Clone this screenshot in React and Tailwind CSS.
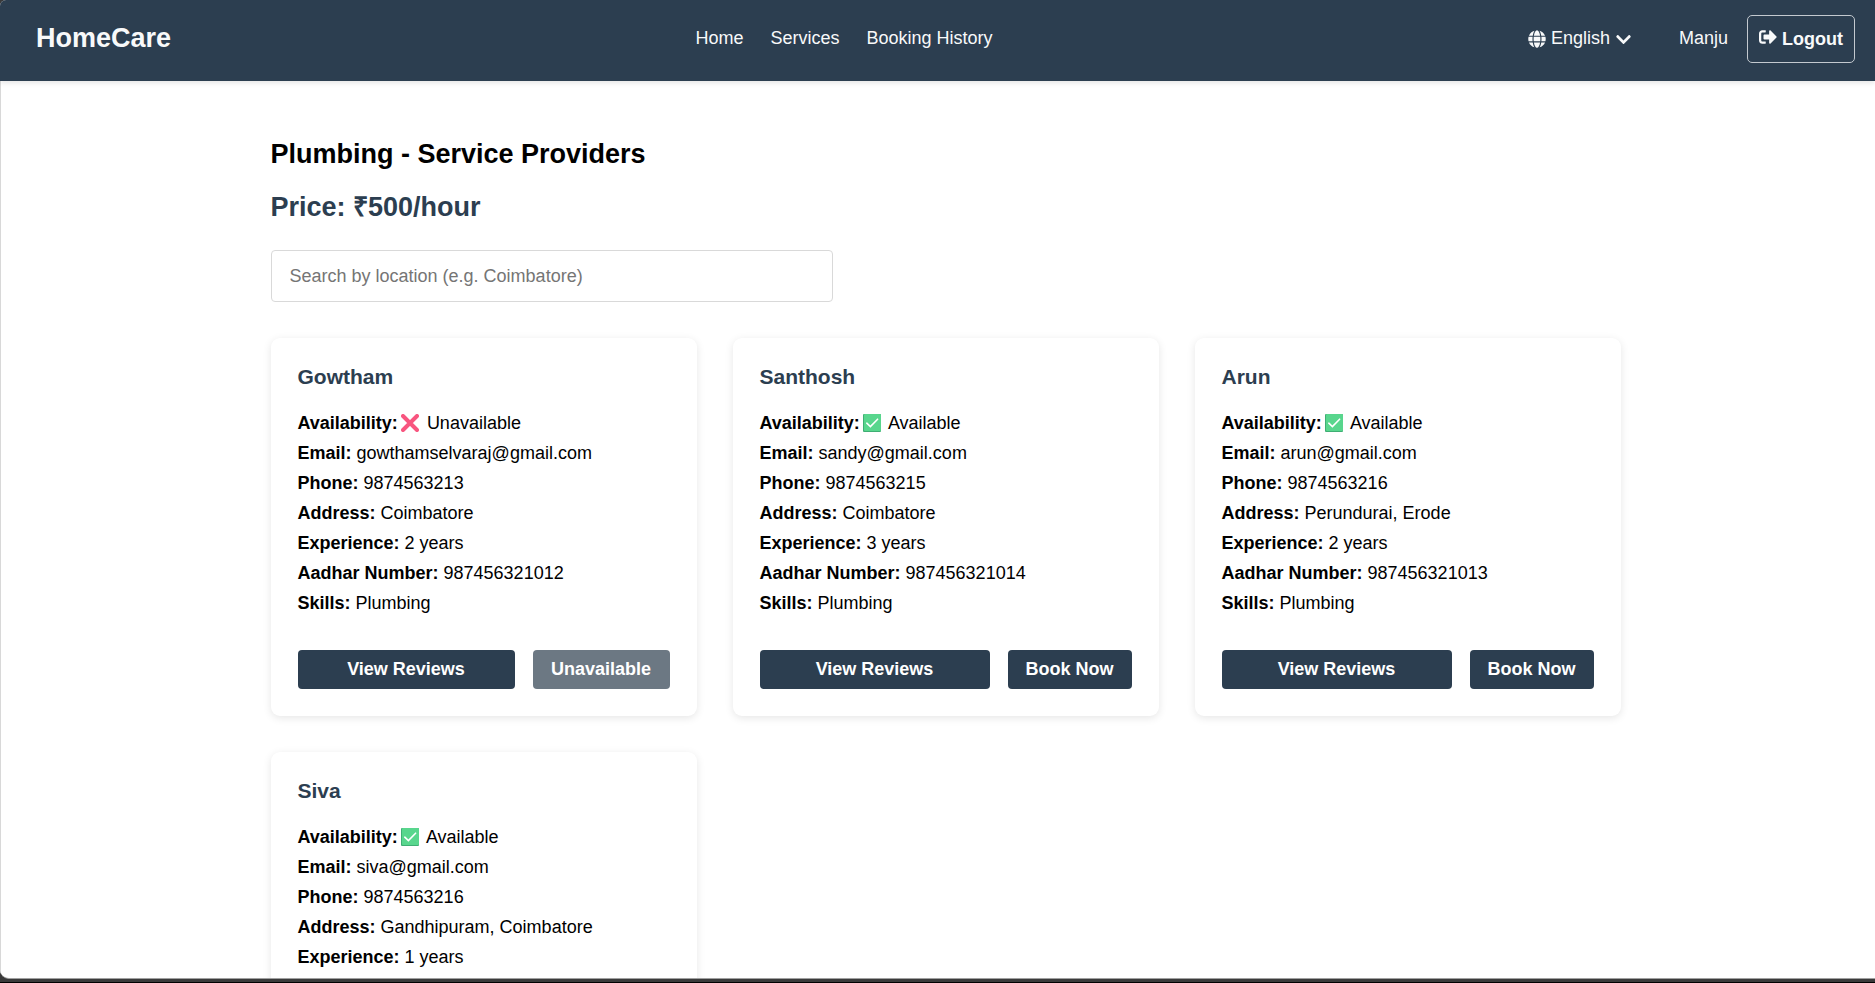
import React from "react";
import { FaGlobe, FaChevronDown, FaSignOutAlt } from "react-icons/fa";

const providers = [
  { name: "Gowtham", available: false, email: "gowthamselvaraj@gmail.com", phone: "9874563213", address: "Coimbatore", years: 2, aadhar: "987456321012", skills: "Plumbing" },
  { name: "Santhosh", available: true, email: "sandy@gmail.com", phone: "9874563215", address: "Coimbatore", years: 3, aadhar: "987456321014", skills: "Plumbing" },
  { name: "Arun", available: true, email: "arun@gmail.com", phone: "9874563216", address: "Perundurai, Erode", years: 2, aadhar: "987456321013", skills: "Plumbing" },
  { name: "Siva", available: true, email: "siva@gmail.com", phone: "9874563216", address: "Gandhipuram, Coimbatore", years: 1 },
];

function CrossMark() {
  return (
    <svg viewBox="0 0 18 18" className="h-[18px] w-[18px] shrink-0">
      <path d="M2 2 16 16M16 2 2 16" stroke="#f8557f" strokeWidth="4" strokeLinecap="round" />
    </svg>
  );
}

function CheckMark() {
  return (
    <svg viewBox="0 0 18 18" className="h-[18px] w-[18px] shrink-0">
      <rect width="18" height="18" rx="1" fill="#3fae74" />
      <rect x="1" width="17" height="17" rx="1" fill="#58d68d" />
      <path d="M3.8 9.2 7.4 12.6 14.6 5.2" fill="none" stroke="#fff" strokeWidth="1.6" strokeLinecap="round" />
    </svg>
  );
}

function Row({ label, children }) {
  return (
    <p>
      <strong>{label}:</strong> {children}
    </p>
  );
}

function ProviderCard({ p }) {
  return (
    <article className="h-[378px] rounded-[9px] bg-white p-[27px] shadow-[0_2px_9px_rgba(0,0,0,0.1)]">
      <h3 className="text-[21px] font-bold leading-6 text-[#2c3e50]">{p.name}</h3>
      <div className="mt-[19px] text-[18px] leading-[30px] text-black">
        <p className="flex items-center">
          <strong>Availability:</strong>
          <span className="ml-[3px] flex items-center">
            {p.available ? <CheckMark /> : <CrossMark />}
            <span className={p.available ? "ml-[7px]" : "ml-2"}>{p.available ? "Available" : "Unavailable"}</span>
          </span>
        </p>
        <Row label="Email">{p.email}</Row>
        <Row label="Phone">{p.phone}</Row>
        <Row label="Address">{p.address}</Row>
        <Row label="Experience">{p.years} years</Row>
        {p.aadhar && <Row label="Aadhar Number">{p.aadhar}</Row>}
        {p.skills && <Row label="Skills">{p.skills}</Row>}
      </div>
      {p.skills && (
        <div className="mt-[32px] flex gap-[18px] text-[18px] font-bold leading-[39px] text-white">
          <button className="h-[39px] flex-1 rounded-[4px] bg-[#2c3e50]">View Reviews</button>
          {p.available ? (
            <button className="h-[39px] w-[124px] rounded-[4px] bg-[#2c3e50]">Book Now</button>
          ) : (
            <button className="h-[39px] w-[137px] rounded-[4px] bg-[#6c7883]">Unavailable</button>
          )}
        </div>
      )}
    </article>
  );
}

export default function App() {
  return (
    <div className="flex h-[983px] w-[1875px] flex-col overflow-hidden border-b border-black bg-[#3a3a3a] font-['Liberation_Sans',Arial,sans-serif]">
      <div className="flex h-[979px] shrink-0 flex-col overflow-hidden rounded-bl-[9px] rounded-tl-[6px] border-b border-[#a0a0a0] bg-white">
        <header className="z-10 flex h-[81px] shrink-0 items-start bg-[#2c3e50] text-[18px] text-[#f8f9fa] shadow-[0_2px_5px_rgba(0,0,0,0.1)]">
          <div className="w-[695.5px] pl-9 pt-[22px] text-[27px] font-bold leading-8">HomeCare</div>
          <nav className="flex gap-[27px] pt-[26px] leading-6">
            <a>Home</a>
            <a>Services</a>
            <a>Booking History</a>
          </nav>
          <div className="ml-auto flex items-start pr-5">
            <div className="flex items-center pt-[26px] leading-6">
              <FaGlobe className="mt-[2px] h-[18px] w-[18px]" />
              <span className="ml-[5px]">English</span>
              <FaChevronDown className="ml-[5px] mt-[2px] h-[17px] w-[17px]" />
            </div>
            <span className="ml-[47px] pt-[26px] leading-6">Manju</span>
            <button className="ml-[19px] mt-[15px] flex h-12 w-[108px] items-center justify-center rounded-[5px] border border-[#c3c9cf] font-bold">
              <FaSignOutAlt className="mb-[5px] h-[18px] w-[18px]" />
              <span className="ml-[5px]">Logout</span>
            </button>
          </div>
        </header>
        <main className="flex-1 border-l border-[#d8d8d8] pl-[269.5px] pt-[57px]">
          <div className="w-[1350px]">
            <h2 className="text-[27px] font-bold leading-8 text-black">Plumbing - Service Providers</h2>
            <p className="mt-[21px] text-[27px] font-bold leading-8 text-[#2c3e50]">Price: ₹500/hour</p>
            <input
              className="mt-[27px] block h-[52px] w-[562px] rounded-[4px] border border-[#d9d9d9] px-[18px] text-[18px] placeholder:text-[#757575]"
              placeholder="Search by location (e.g. Coimbatore)"
            />
            <div className="mt-9 grid grid-cols-3 gap-9">
              {providers.map((p) => (
                <ProviderCard key={p.name} p={p} />
              ))}
            </div>
          </div>
        </main>
      </div>
    </div>
  );
}
